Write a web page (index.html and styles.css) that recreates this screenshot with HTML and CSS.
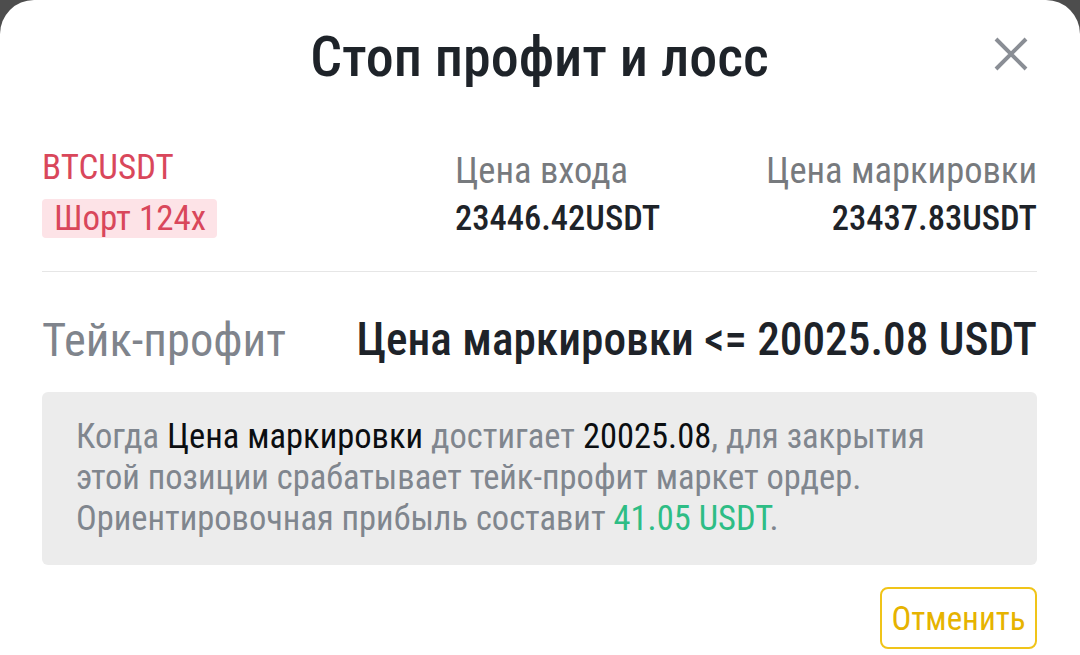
FILE: index.html
```html
<!DOCTYPE html>
<html lang="ru">
<head>
  <meta charset="UTF-8" />
  <meta name="viewport" content="width=device-width, initial-scale=1.0"/>
  <title>Стоп профит и лосс</title>
  <link rel="stylesheet" href="styles.css">
</head>
<body>

  <!-- Модальное окно -->
  <div class="sheet">

    <div class="sheet-header">
      <h1 class="sheet-title">Стоп профит и лосс</h1>
      <span class="sheet-close">
        <svg width="34" height="34" viewBox="0 0 34 34">
          <path d="M2 2 L32 32 M32 2 L2 32" stroke="#8a8e95" stroke-width="4" fill="none"/>
        </svg>
      </span>
    </div>

    <!-- Позиция -->
    <div class="position">
      <div class="position-col">
        <div class="symbol">BTCUSDT</div>
        <div><span class="side-badge">Шорт 124x</span></div>
      </div>
      <div class="position-col">
        <div class="label">Цена входа</div>
        <div class="value">23446.42USDT</div>
      </div>
      <div class="position-col position-col-right">
        <div class="label">Цена маркировки</div>
        <div class="value">23437.83USDT</div>
      </div>
    </div>

    <!-- Тейк-профит -->
    <div class="tp-row">
      <span class="tp-label">Тейк-профит</span>
      <span class="tp-value">Цена маркировки &lt;= 20025.08 USDT</span>
    </div>

    <div class="note">
      Когда <span class="dark">Цена маркировки</span> достигает <span class="dark">20025.08</span>, для закрытия<br>
      этой позиции срабатывает тейк-профит маркет ордер.<br>
      Ориентировочная прибыль составит <span class="green">41.05 USDT</span>.
    </div>

    <div class="actions">
      <button class="cancel-button">Отменить</button>
    </div>

  </div>

</body>
</html>
```
FILE: styles.css
```css
body {
  margin: 0;
  font-family: "Roboto Condensed", Roboto, sans-serif;
  background: #4d4d4d;
  height: 655px;
  overflow: hidden;
}

.sheet {
  background: #fff;
  border-radius: 34px 34px 0 0;
  height: 655px;
  padding: 0 43px 0 42px;
  box-sizing: border-box;
}

.sheet-header {
  position: relative;
  padding-top: 23px;
  text-align: center;
}

.sheet-title {
  margin: 0;
  font-size: 56px;
  font-weight: 500;
  line-height: 68px;
  color: #1e2329;
}

.sheet-close {
  position: absolute;
  top: 37px;
  right: 9px;
  width: 34px;
  height: 34px;
}

.position {
  display: grid;
  grid-template-columns: 413px 1fr auto;
  margin-top: 57px;
  padding-bottom: 33px;
  border-bottom: 1px solid #e6e6e6;
}

.position-col {
  display: flex;
  flex-direction: column;
}

.position-col-right {
  text-align: right;
}

.symbol {
  font-size: 35px;
  line-height: 40px;
  margin-bottom: 11px;
  color: #d9475b;
}

.side-badge {
  display: inline-block;
  background: #fde3e7;
  color: #d9475b;
  font-size: 35px;
  line-height: 39px;
  padding: 0 11px 0 12px;
  border-radius: 4px;
}

.label {
  font-size: 36.5px;
  line-height: 46px;
  margin-bottom: 4px;
  color: #777a7e;
}

.value {
  font-size: 34.5px;
  line-height: 40px;
  font-weight: 500;
  color: #1e2329;
}

.tp-row {
  display: flex;
  justify-content: space-between;
  margin-top: 40px;
  line-height: 56px;
}

.tp-label {
  font-size: 46.5px;
  color: #7f848c;
}

.tp-value {
  font-size: 45.3px;
  font-weight: 500;
  color: #1e2329;
}

.note {
  margin-top: 24px;
  background: #ececec;
  border-radius: 6px;
  padding: 24px 34px 26px;
  font-size: 34.5px;
  line-height: 41px;
  color: #80868e;
}

.note .dark {
  color: #0b0e11;
}

.note .green {
  color: #2ebd85;
}

.actions {
  display: flex;
  justify-content: flex-end;
  margin-top: 22px;
}

.cancel-button {
  font-family: "Roboto Condensed", Roboto, sans-serif;
  font-size: 33px;
  color: #e6b300;
  background: #fff;
  border: 2.5px solid #f0c419;
  border-radius: 8px;
  width: 157px;
  height: 62px;
  padding: 0;
}
```
